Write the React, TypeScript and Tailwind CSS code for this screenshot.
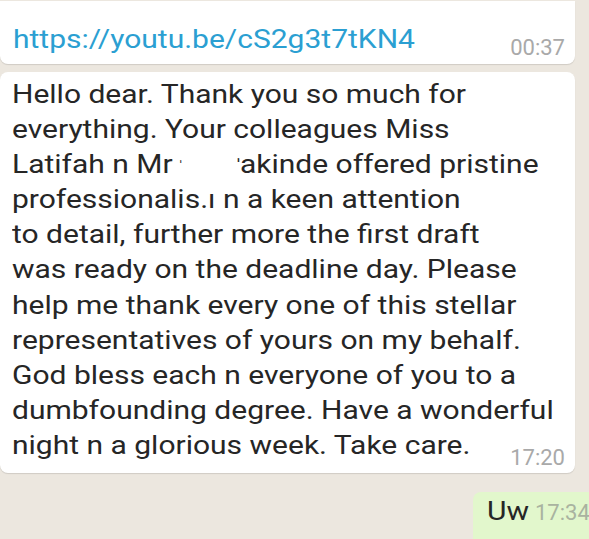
import React from "react";

const lines: (string | null)[] = [
  "Hello dear. Thank you so much for",
  "everything. Your colleagues Miss",
  null,
  "professionalis.ı n a keen attention",
  "to detail, further more the first draft",
  "was ready on the deadline day. Please",
  "help me thank every one of this stellar",
  "representatives of yours on my behalf.",
  "God bless each n everyone of you to a",
  "dumbfounding degree. Have a wonderful",
];

function Wide({ children }: { children: React.ReactNode }) {
  return <span className="inline-block origin-left scale-x-[1.2] whitespace-pre">{children}</span>;
}

export default function App() {
  return (
    <div
      className="w-[589px] h-[539px] overflow-hidden bg-[#ece7df] flex flex-col"
      style={{ fontFamily: "Roboto, 'Noto Sans', sans-serif" }}
    >
      <div className="mt-[1px] w-[575px] h-[63px] shrink-0 bg-white rounded-b-[8px] shadow-[0_1px_1px_rgba(0,0,0,0.12)] flex items-end justify-between pl-[13px] pr-[10px] pb-[7px]">
        <span className="text-[25px] leading-[35px] text-[#2b9fd2]">
          <Wide>https://youtu.be/cS2g3t7tKN4</Wide>
        </span>
        <span className="text-[22px] leading-[26px] text-[#a9a9a9] mb-[-4px]">00:37</span>
      </div>

      <div className="mt-[8px] w-[575px] h-[401px] shrink-0 bg-white rounded-[8px] shadow-[0_1px_1px_rgba(0,0,0,0.12)] pl-[12px] pr-[10px] pt-[5px] text-[25px] leading-[35.1px] text-[#262626]">
        {lines.map((l, i) =>
          l === null ? (
            <div key={i}>
              <Wide>
                Latifah n Mr
                <span className="inline-block w-[6px]" />
                <span className="text-[10px] align-top">ˈ</span>
                <span className="inline-block w-[46px]" />
                <span className="text-[15px] align-top">ˈ</span>akinde offered pristine
              </Wide>
            </div>
          ) : (
            <div key={i}>
              <Wide>{l}</Wide>
            </div>
          )
        )}
        <div className="flex items-end justify-between">
          <Wide>night n a glorious week. Take care.</Wide>
          <span className="text-[22px] leading-[26px] text-[#a9a9a9] mb-[-8px]">17:20</span>
        </div>
      </div>

      <div className="mt-[19px] ml-[473px] w-[140px] h-[60px] shrink-0 bg-[#e2f7cc] rounded-tl-[8px] pl-[14px] pt-[2px] flex items-start whitespace-nowrap">
        <span className="w-[48px] text-[25px] leading-[35px] text-[#262626]">
          <Wide>Uw</Wide>
        </span>
        <span className="mt-[6px] text-[22px] leading-[26px] text-[#a9b3a0]">17:34</span>
      </div>
    </div>
  );
}
